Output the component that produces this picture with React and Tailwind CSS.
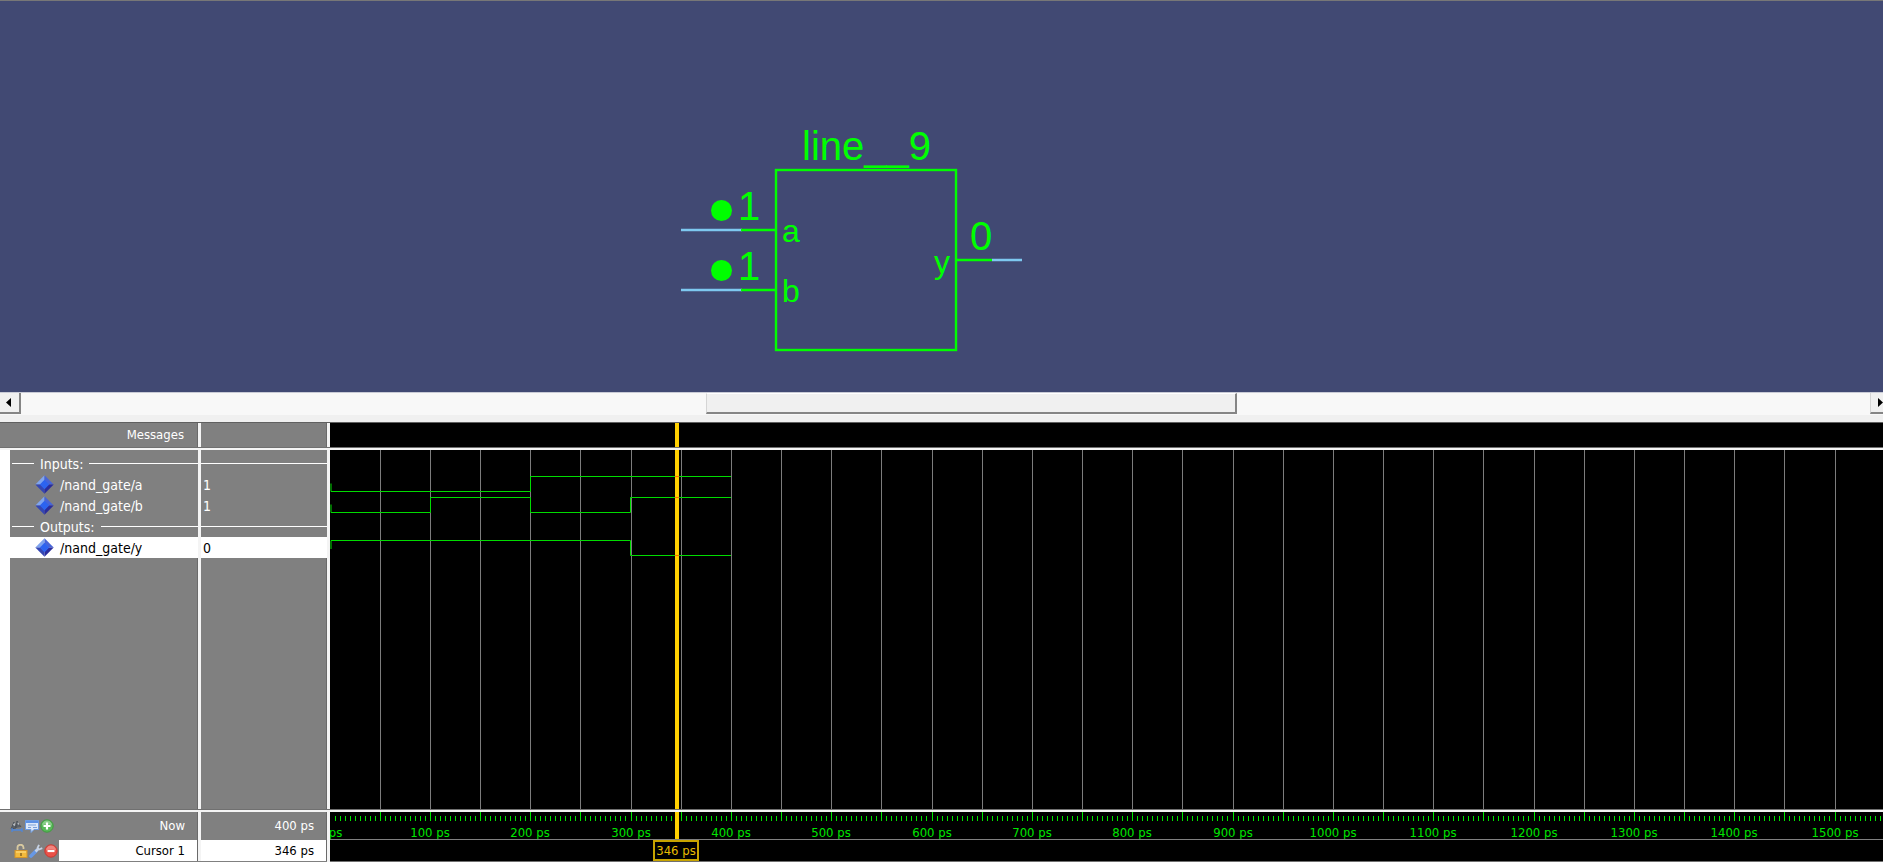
import React from "react";

const GREEN = "#00ff00";
const STEP = 50;
const majorX = (i) => Math.floor(i * 50.17);
const majors = Array.from({ length: 31 }, (_, i) => i);

const WAVES = [
  "M1 33.5V41.5H200.5V26.5H401",
  "M1 54.5V62.5H100.5V47.5H200.5V62.5H300.5V47.5H401",
  "M1 99V90.5H300.5V105.5H401",
];

const ROWS = [
  { kind: "divider", name: "Inputs:" },
  { kind: "signal", name: "/nand_gate/a", value: "1" },
  { kind: "signal", name: "/nand_gate/b", value: "1" },
  { kind: "divider", name: "Outputs:" },
  { kind: "signal", name: "/nand_gate/y", value: "0", selected: true },
];

function Schematic() {
  return (
    <section className="flex shrink-0 grow basis-[392px] items-start border-t border-[#777777] bg-[#414973] pt-[119px] pl-[36%]">
      <svg
        width="352"
        height="240"
        fill="none"
        fontFamily="'Liberation Sans', Arial, sans-serif"
        role="img"
        aria-label="line__9"
      >
        <rect x="98" y="50" width="180" height="180" stroke={GREEN} strokeWidth="2.400" />
        <g strokeWidth="2.400">
          <path d="M3 110H64M3 170H64M314 140H344" stroke="#7ec8f0" />
          <path d="M63 110H98M63 170H98M278 140H314" stroke={GREEN} />
        </g>
        <g fill={GREEN}>
          <circle cx="43.500" cy="90.500" r="10.500" />
          <circle cx="43.500" cy="150.500" r="10.500" />
          <text x="124" y="40" fontSize="40">line__9</text>
          <text x="60" y="100" fontSize="40">1</text>
          <text x="60" y="160" fontSize="40">1</text>
          <text x="292" y="130" fontSize="40">0</text>
          <text x="104" y="122" fontSize="32">a</text>
          <text x="104" y="182" fontSize="32">b</text>
          <text x="256" y="153" fontSize="32">y</text>
        </g>
      </svg>
    </section>
  );
}

function ScrollButton({ label, path, className }) {
  return (
    <button
      type="button"
      aria-label={label}
      className={`flex h-[21px] w-[21px] shrink-0 items-center justify-center border-r-2 border-b-2 border-[#858585] bg-[#f0f0f0] ${className}`}
    >
      <svg width="5" height="9" viewBox="0 0 5 9" fill="#000">
        <path d={path} />
      </svg>
    </button>
  );
}

function ScrollBar() {
  return (
    <div className="flex h-[23px] shrink-0 border-t border-[#c9cbd6] bg-[#f8f8f8]">
      <ScrollButton label="Scroll left" path="M5 0V9L0 4.500Z" className="pr-[2px]" />
      <div className="flex grow pl-[685px]">
        <div className="h-[21px] w-[531px] border-t border-r-2 border-b-2 border-l border-t-white border-r-[#858585] border-b-[#858585] border-l-[#d5d5d5] bg-[#f0f0f0]" />
      </div>
      <ScrollButton label="Scroll right" path="M0 0V9L5 4.500Z" className="-mr-2 border-l border-l-[#d5d5d5]" />
    </div>
  );
}

function Diamond() {
  return (
    <svg width="19" height="19" viewBox="0 0 19 19" className="shrink-0" aria-hidden="true">
      <path d="M9.500 0.300L0.300 9.500L5.300 9.500L9.500 5.300Z" fill="#7fa4ee" />
      <path d="M9.500 0.300L18.700 9.500L13.700 9.500L9.500 5.300Z" fill="#4664d8" />
      <path d="M0.300 9.500L9.500 18.700L9.500 13.700L5.300 9.500Z" fill="#3446b4" />
      <path d="M18.700 9.500L9.500 18.700L9.500 13.700L13.700 9.500Z" fill="#2a2c9c" />
      <path d="M9.500 4.800L14.200 9.500L9.500 14.200L4.800 9.500Z" fill="#2c63f0" />
    </svg>
  );
}

function IconButton({ label, children }) {
  return (
    <button type="button" aria-label={label} className="shrink-0">
      <svg width="14" height="14" viewBox="0 0 14 14" fill="none">
        {children}
      </svg>
    </button>
  );
}

function RoundIcon({ edge, face, path }) {
  return (
    <>
      <circle cx="7" cy="7" r="6.200" fill={face} stroke={edge} />
      <path d="M2 6.500A5 5 0 0 1 12 6.500Q7 4 2 6.500Z" fill="#fff" opacity=".3" />
      <path d={path} stroke="#fff" strokeWidth="2.200" />
    </>
  );
}

function Columns({ className, left, right }) {
  return (
    <div className={`grid grid-cols-[198px_3px_126px] ${className}`}>
      <div className="flex items-center justify-end border-r border-[#6a6a6a]">{left}</div>
      <div className="bg-[#f4f4f4]" />
      <div className="flex items-center justify-end border-r border-[#6a6a6a]">{right}</div>
    </div>
  );
}

function SignalTable() {
  return (
    <table className="w-[327px] table-fixed border-collapse text-left text-sm">
      <colgroup>
        <col className="w-[10px]" />
        <col className="w-[188px]" />
        <col className="w-[3px]" />
        <col className="w-[126px]" />
      </colgroup>
      <tbody>
        <tr className="h-[3px]">
          <td className="bg-white p-0" />
          <td className="p-0" />
          <td className="bg-[#f4f4f4] p-0" />
          <td className="p-0" />
        </tr>
        {ROWS.map((row) => (
          <tr key={row.name} className="h-[21px]">
            <td className="bg-white p-0" />
            <th
              scope="row"
              className={`p-0 font-normal ${row.selected ? "bg-white text-black" : ""}`}
            >
              {row.kind === "divider" ? (
                <div className="flex items-center gap-[6px] pl-[2px]">
                  <span className="h-px w-[22px] bg-white" />
                  <span className="leading-5">{row.name}</span>
                  <span className="h-px grow bg-white" />
                </div>
              ) : (
                <div className="flex items-center gap-[6px] pl-[25px]">
                  <Diamond />
                  <span className="leading-5">{row.name}</span>
                </div>
              )}
            </th>
            <td className="bg-[#f4f4f4] p-0" />
            <td className={`p-0 ${row.selected ? "bg-white text-black" : ""}`}>
              {row.kind === "divider" ? (
                <div className="h-px bg-white" />
              ) : (
                <div className="pl-[2px] leading-5">{row.value}</div>
              )}
            </td>
          </tr>
        ))}
      </tbody>
    </table>
  );
}

function CursorLine() {
  return <div className="absolute inset-y-0 left-[345px] w-1 bg-[#ffcf00]" />;
}

function Waveforms() {
  return (
    <div className="relative min-w-0 grow overflow-hidden">
      <svg className="absolute inset-0 h-full w-full" role="img" aria-label="Waveforms">
        {majors.slice(1).map((i) => (
          <line key={i} x1={majorX(i) + 0.5} x2={majorX(i) + 0.5} y1="0" y2="100%" stroke="#7c7c7c" />
        ))}
        {WAVES.map((d) => (
          <path key={d} d={d} fill="none" stroke="#00dc00" />
        ))}
      </svg>
      <CursorLine />
      <svg className="absolute top-0 left-[345px]" width="4" height="120" stroke="#ff6000">
        <path d="M0 26.500H4M0 47.500H4M0 105.500H4" />
      </svg>
    </div>
  );
}

function Ruler() {
  return (
    <div className="relative h-7 overflow-hidden border-b border-[#808080]">
      <svg
        className="absolute inset-0 h-full w-full"
        fontFamily="'DejaVu Sans Condensed', 'DejaVu Sans', sans-serif"
        fontSize="13"
        fill="#00e600"
      >
        {majors.map((i) => (
          <g key={i}>
            {i > 0 && <rect x={majorX(i)} y="0" width="1" height="9" />}
            {Array.from({ length: 9 }, (_, k) => (
              <rect key={k} x={majorX(i) + (k + 1) * (STEP / 10)} y="4" width="1" height="5" />
            ))}
            {i % 2 === 0 && (
              <text x={majorX(i)} y="25" textAnchor="middle">
                {i * 50} ps
              </text>
            )}
          </g>
        ))}
      </svg>
      <CursorLine />
    </div>
  );
}

function Divider() {
  return <div className="h-[3px] shrink-0 border-t border-[#707070] bg-[#f4f4f4]" />;
}

function WavePanel() {
  return (
    <section className="flex shrink-0 grow basis-[440px] flex-col border-t border-[#606060] bg-black text-[13px] leading-5 text-white">
      <div className="flex h-6 shrink-0">
        <Columns className="bg-[#808080]" left={<h2 className="pr-[13px]">Messages</h2>} right={null} />
        <div className="w-[3px] shrink-0 bg-[#f4f4f4]" />
        <div className="relative grow">
          <CursorLine />
        </div>
      </div>
      <Divider />
      <div className="flex grow">
        <div className="flex shrink-0 flex-col bg-[#808080]">
          <SignalTable />
          <div className="grid grow grid-cols-[10px_188px_3px_126px]">
            <div className="bg-white" />
            <div className="border-r border-[#6a6a6a]" />
            <div className="bg-[#f4f4f4]" />
            <div className="border-r border-[#6a6a6a]" />
          </div>
        </div>
        <div className="w-[3px] shrink-0 bg-[#f4f4f4]" />
        <Waveforms />
      </div>
      <Divider />
      <div className="flex shrink-0">
        <div className="shrink-0 bg-[#808080]">
          <Columns
            className="h-7"
            left={
              <div className="flex grow items-center gap-px pr-3 pl-[10px]">
                <IconButton label="Find">
                  <path d="M1 10L4 3L6 9ZM6 9L7 2L11 8" fill="#5a6068" stroke="#4c525a" />
                  <path d="M3 6L4.500 3.500L5 7ZM7.500 5L8 3L9.500 6Z" fill="#d4d8dc" />
                  <path d="M2 11H12M2 9V13M12 9V13" stroke="#4f86d8" strokeWidth="1.300" />
                </IconButton>
                <IconButton label="Edit grid">
                  <path d="M.5 1.500H13.500V10.500H9L6 13.500V10.500H.5Z" fill="#dce8fa" stroke="#6b9ae0" />
                  <path d="M1 3H13" stroke="#5c90e4" strokeWidth="2" />
                  <path d="M3 6H11M3 8.500H6M8 8.500H12" stroke="#7ba0d8" />
                </IconButton>
                <IconButton label="Add cursor">
                  <RoundIcon edge="#3f9a3f" face="#58b858" path="M7 3.500V10.500M3.500 7H10.500" />
                </IconButton>
                <span className="ml-auto">Now</span>
              </div>
            }
            right={<span className="pr-3">400 ps</span>}
          />
          <Columns
            className="h-[22px] border-b border-[#808080]"
            left={
              <div className="flex h-full grow items-center gap-px pl-[14px]">
                <IconButton label="Lock cursor">
                  <path d="M3.500 7V4A3 3 0 0 1 9.500 3.500V5" stroke="#d8c9a0" strokeWidth="1.800" />
                  <rect x="1" y="6.500" width="12" height="7" fill="#f3ba3c" stroke="#d4952a" />
                  <path d="M2 8H12" stroke="#ffe08a" />
                  <path d="M7 9V12" stroke="#8a6420" strokeWidth="1.500" />
                </IconButton>
                <IconButton label="Edit cursor">
                  <path d="M2 12L7 7" stroke="#6798e4" strokeWidth="3.600" strokeLinecap="round" />
                  <path d="M6.500 7.500L9.500 4.500" stroke="#c6d2e4" strokeWidth="2.500" />
                  <path d="M10 .8L8.500 4L10 5.500L13.300 4.200" stroke="#c6d2e4" strokeWidth="1.800" />
                </IconButton>
                <IconButton label="Delete cursor">
                  <RoundIcon edge="#c93830" face="#ea5148" path="M3.500 7H10.500" />
                </IconButton>
                <span className="flex h-full grow items-center justify-end bg-white pr-3 text-black">
                  Cursor 1
                </span>
              </div>
            }
            right={
              <span className="flex h-full grow items-center justify-end bg-white pr-3 text-black">
                346 ps
              </span>
            }
          />
        </div>
        <div className="w-[3px] shrink-0 bg-[#f4f4f4]" />
        <div className="min-w-0 grow">
          <Ruler />
          <div className="flex h-[22px] border-b border-[#707070] pl-[323px]">
            <output className="flex h-[21px] w-[46px] items-center justify-center border-2 border-[#c8a400] whitespace-nowrap text-[#e8bd00]">
              346 ps
            </output>
          </div>
        </div>
      </div>
    </section>
  );
}

export default function App() {
  return (
    <main className="flex min-h-screen flex-col overflow-hidden bg-[#f0f0f0] font-['DejaVu_Sans_Condensed','DejaVu_Sans',sans-serif]">
      <Schematic />
      <ScrollBar />
      <div className="h-[7px] shrink-0 bg-[#f0f0f0]" />
      <WavePanel />
    </main>
  );
}
